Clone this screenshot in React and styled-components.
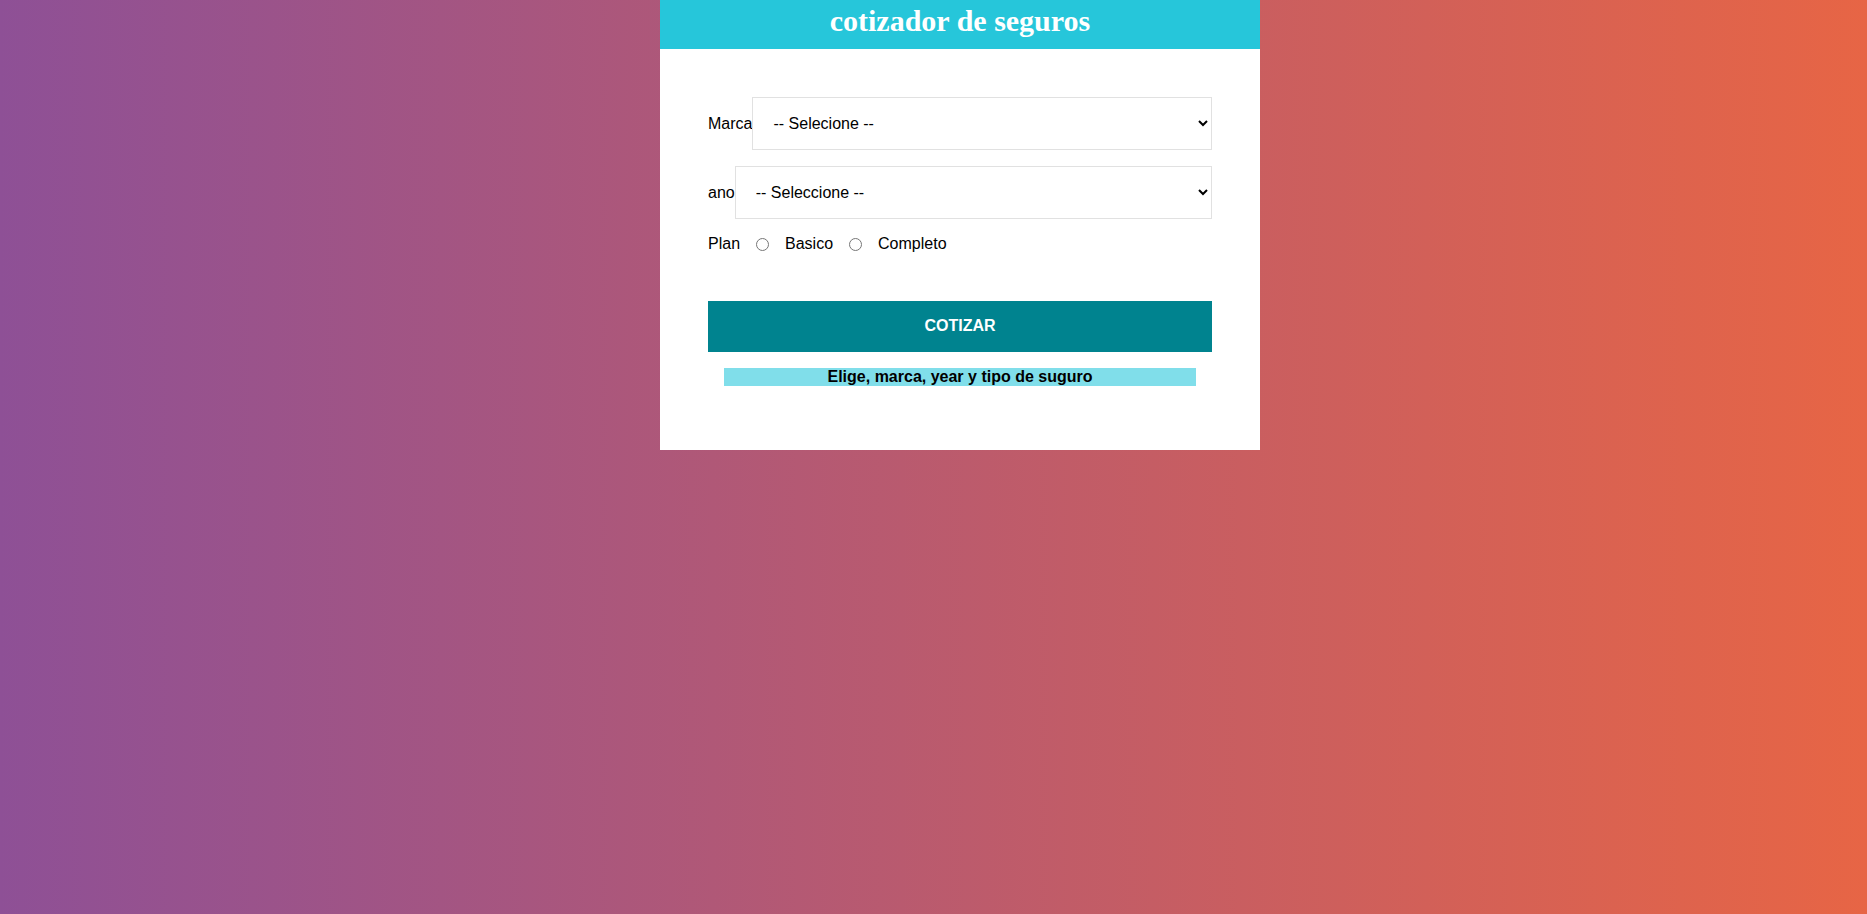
import styled, { createGlobalStyle } from 'styled-components';
import { useState } from 'react';

const GlobalStyle = createGlobalStyle`
html, body {
    margin: 0;
    min-height: 100%;
}
body {
    min-height: 100vh;
    background: linear-gradient(to right, #8e5096, #e76545);
    font-family: "Liberation Sans", Arial, sans-serif;
    font-size: 16px;
}
`

export default function App() {
    const [marca, setMarca] = useState('');
    const [year, setYear] = useState('');
    const [plan, setPlan] = useState('');

    const handleSubmit = (e) => {
        e.preventDefault()
    }

    return (
        <Pagina>
            <GlobalStyle />
            <Contenedor>
                <ContenedorHeader>
                    <TextoHeader>cotizador de seguros</TextoHeader>
                </ContenedorHeader>
                <ContenedorFormulario>
                    <form onSubmit={handleSubmit}>
                        <Campo>
                            <Label>Marca</Label>
                            <Select name="marca" value={marca} onChange={e => setMarca(e.target.value)}>
                                <option value="">-- Selecione --</option>
                                <option value="americano">Americano</option>
                                <option value="europeo">Europeo</option>
                                <option value="asiatico">Asiatico</option>
                            </Select>
                        </Campo>
                        <Campo>
                            <Label>ano</Label>
                            <Select name="year" value={year} onChange={e => setYear(e.target.value)}>
                                <option value="">-- Seleccione --</option>
                                <option value="2021">2021</option>
                                <option value="2020">2020</option>
                            </Select>
                        </Campo>
                        <Campo>
                            <Label>Plan</Label>
                            <InputRadio
                                type="radio"
                                name="plan"
                                value="basico"
                                checked={plan === 'basico'}
                                onChange={e => setPlan(e.target.value)} />Basico
                            <InputRadio
                                type="radio"
                                name="plan"
                                value="completo"
                                checked={plan === 'completo'}
                                onChange={e => setPlan(e.target.value)} />Completo
                        </Campo>
                        <Boton type="submit">Cotizar</Boton>
                    </form>
                    <Resumen>Elige, marca, year y tipo de suguro</Resumen>
                </ContenedorFormulario>
            </Contenedor>
        </Pagina>
    )
}

//Styles
const Pagina = styled.div`
display: flex;
justify-content: center;
padding-left: 53px;
`
const Contenedor = styled.div`
width: 100%;
max-width: 600px;
`
const ContenedorHeader = styled.header`
background-color: #26c6da;
height: 49px;
display: flex;
justify-content: center;
align-items: center;
`
const TextoHeader = styled.h1`
margin: 0 0 8px;
color: #fff;
font-family: "Liberation Serif", serif;
font-size: 30px;
font-weight: bold;
line-height: 1;
`
const ContenedorFormulario = styled.div`
background-color: #fff;
padding: 48px;
`
const Campo = styled.div`
display: flex;
align-items: center;
margin-bottom: 16px;
`
const Label = styled.label`
color: #000;
`
const Select = styled.select`
flex: 1;
display: block;
padding: 16px;
border: 1px solid #e1e1e1;
background: #fff;
font-family: "Liberation Sans", Arial, sans-serif;
font-size: 16px;
color: #000;
`
const InputRadio = styled.input`
margin: 0 16px;
`
const Boton = styled.button`
display: block;
width: 100%;
margin-top: 48px;
padding: 16px 16px 17px;
border: none;
background-color: #00838f;
color: #fff;
font-family: "Liberation Sans", Arial, sans-serif;
font-size: 16px;
font-weight: bold;
text-transform: uppercase;
`
const Resumen = styled.p`
margin: 16px;
background-color: #80deea;
color: #000;
font-weight: bold;
text-align: center;
`
